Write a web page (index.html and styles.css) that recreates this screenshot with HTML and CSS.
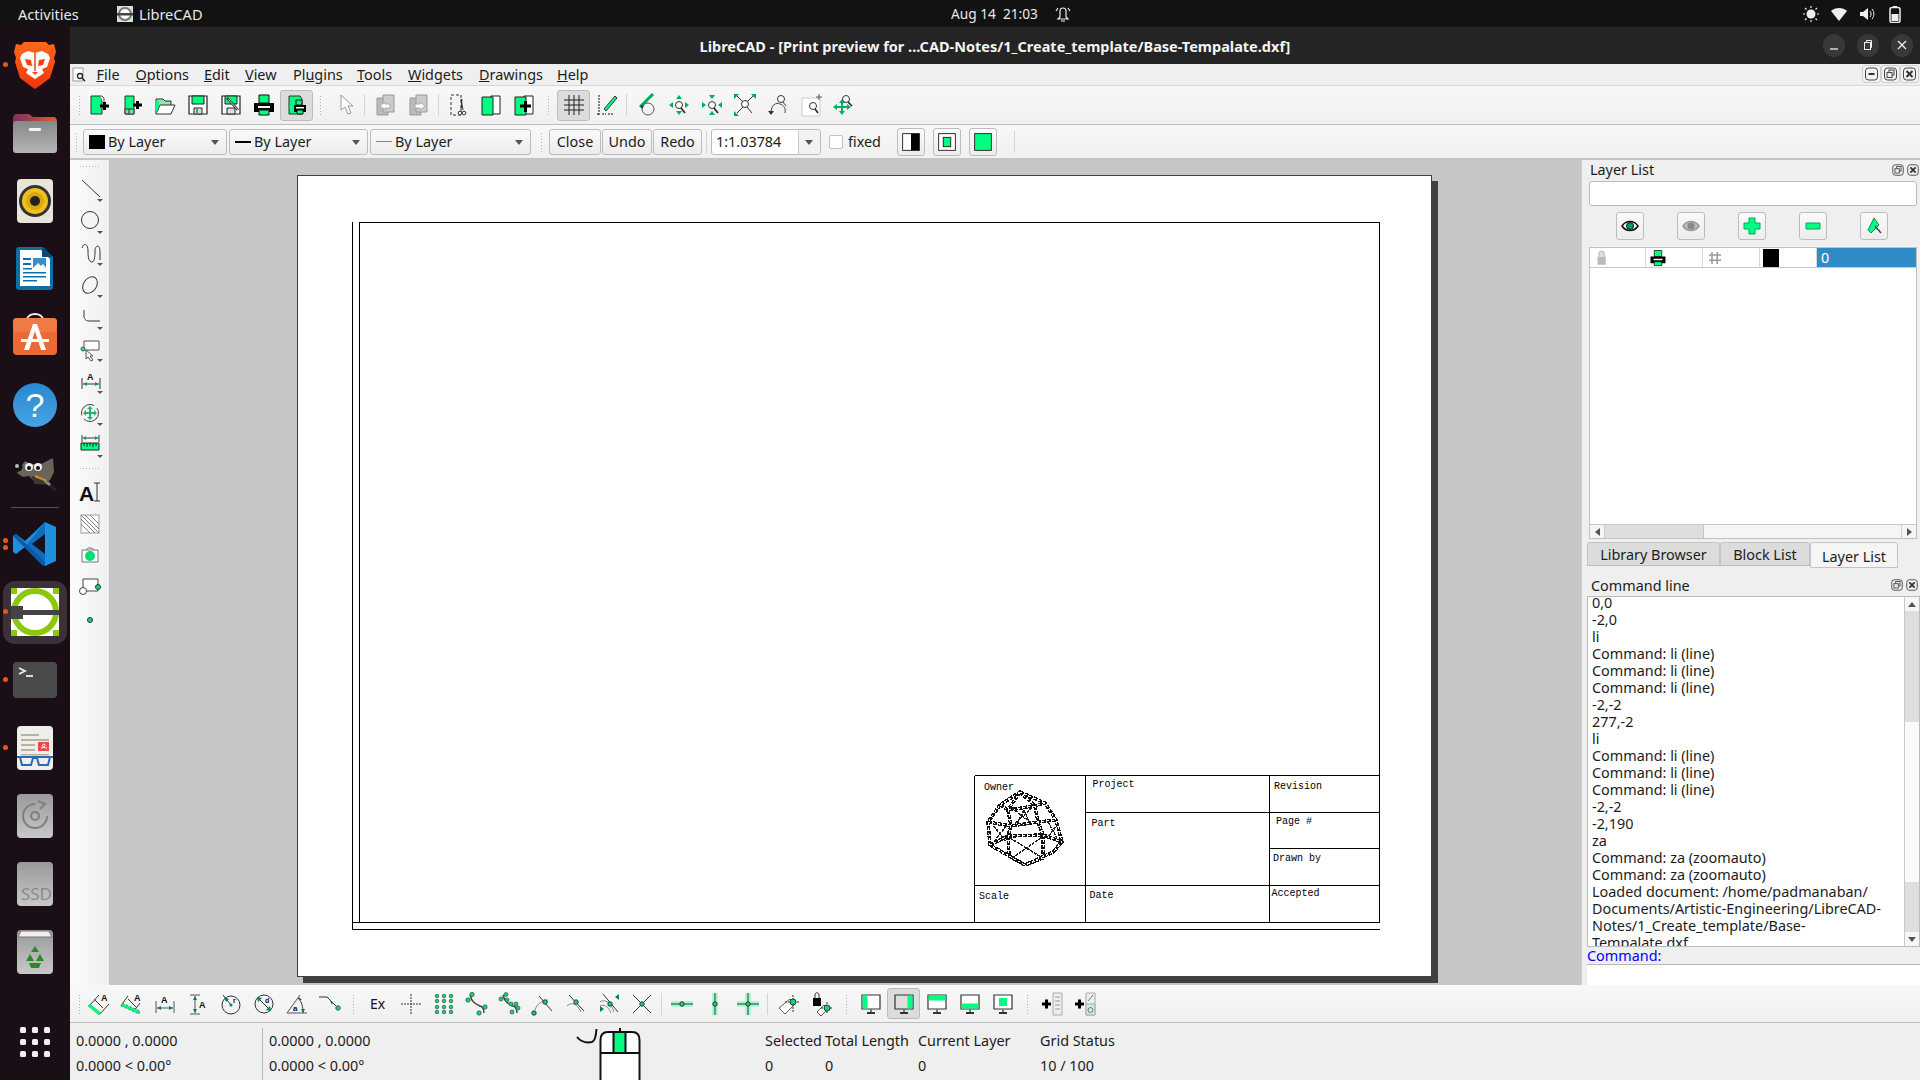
FILE: index.html
```html
<!DOCTYPE html>
<html lang="en">
<head>
<meta charset="utf-8">
<title>LibreCAD</title>
<link rel="stylesheet" href="styles.css">
</head>
<body>
<svg class="defs" xmlns="http://www.w3.org/2000/svg">
  <symbol id="new" viewBox="0 0 24 24"><path d="M4 3h9l2 3v15H4z" fill="#00ff80" stroke="#333"/><path d="M13 3h2l2 2v5" fill="#fff" stroke="#555"/><path d="M13 13h9M17.500 9v8" stroke="#000" stroke-width="3" fill="none"/></symbol>
  <symbol id="newt" viewBox="0 0 24 24"><path d="M5 3h9v18H5z" fill="#00ff80" stroke="#333"/><path d="M5 16h9v5H5zM9 16v5" fill="#7fd8a8" stroke="#333"/><path d="M13 12h9M17.500 8v8" stroke="#000" stroke-width="3" fill="none"/></symbol>
  <symbol id="open" viewBox="0 0 24 24"><path d="M3 21V6h7l2 2h6v4" fill="#8fe8b0" stroke="#333"/><path d="M3 21l4-9h15l-4 9z" fill="#fff" stroke="#333"/><path d="M3 21V8h3v4z" fill="#00ff80"/></symbol>
  <symbol id="save" viewBox="0 0 24 24"><path d="M3 3h18v18H3z" fill="#fff" stroke="#222" stroke-width="1.200"/><path d="M6 3h12v8H6z" fill="#00ff80" stroke="#222"/><path d="M8 15h8v6H8z" fill="#ddd" stroke="#222"/><path d="M10 16h2v4h-2z" fill="#00c060"/></symbol>
  <symbol id="saveas" viewBox="0 0 24 24"><path d="M3 3h18v18H3z" fill="#fff" stroke="#222" stroke-width="1.200"/><path d="M6 3h12v8H6z" fill="#00ff80" stroke="#222"/><path d="M8 15h8v6H8z" fill="#ddd" stroke="#222"/><path d="M8 5l11 12" stroke="#333" stroke-width="2.500"/><path d="M9 6l10 11" stroke="#ccc"/></symbol>
  <symbol id="print" viewBox="0 0 24 24"><path d="M7 2h10v8H7z" fill="#00ff80" stroke="#111"/><path d="M2 10h20v9H2z" fill="#000"/><path d="M6 13h12v2H6z" fill="#fff"/><path d="M7 17h10v5H7z" fill="#00ff80" stroke="#111"/></symbol>
  <symbol id="preview" viewBox="0 0 24 24"><path d="M4 3h11l2 3v15H4z" fill="#00ff80" stroke="#333"/><path d="M11 7h6v5h-6z" fill="#00ff80" stroke="#111"/><path d="M9 12h12v7H9z" fill="#000"/><path d="M11 14h8v1.500h-8z" fill="#fff"/><path d="M12 17h6v4h-6z" fill="#00ff80" stroke="#111"/></symbol>
  <symbol id="arrow" viewBox="0 0 24 24"><path d="M8 2v15l4-3 3 7 3-1-3-7h5z" fill="#fff" stroke="#999"/></symbol>
  <symbol id="copy" viewBox="0 0 24 24"><path d="M3 5h11v17H3z" fill="#bbb" stroke="#999"/><path d="M9 2h11v17H9z" fill="#ccc" stroke="#999"/><path d="M6 13l5-4v2h5v4h-5v2z" fill="#fff" stroke="#aaa"/></symbol>
  <symbol id="paste" viewBox="0 0 24 24"><path d="M3 5h11v17H3z" fill="#bbb" stroke="#999"/><path d="M9 2h11v17H9z" fill="#ccc" stroke="#999"/><path d="M18 13l-5-4v2H8v4h5v2z" fill="#fff" stroke="#aaa"/></symbol>
  <symbol id="cut" viewBox="0 0 24 24"><path d="M5 2h10v20H5z" fill="none" stroke="#333" stroke-dasharray="3 2"/><path d="M16 6l-1 11M15 6l2 11" stroke="#333"/><circle cx="14" cy="20" r="1.800" fill="#fff" stroke="#333"/><circle cx="18" cy="20" r="1.800" fill="#fff" stroke="#333"/></symbol>
  <symbol id="pages" viewBox="0 0 24 24"><path d="M12 3h9v18h-9z" fill="#fff" stroke="#222"/><path d="M3 4h11v18H3z" fill="#00ff80" stroke="#222"/></symbol>
  <symbol id="pageadd" viewBox="0 0 24 24"><path d="M12 3h9v18h-9z" fill="#fff" stroke="#222"/><path d="M3 4h11v18H3z" fill="#00ff80" stroke="#222"/><path d="M8 13h11M13.500 8v11" stroke="#000" stroke-width="3"/></symbol>
  <symbol id="grid" viewBox="0 0 24 24"><path d="M7 2v20M12 2v20M17 2v20M2 7h20M2 12h20M2 17h20" stroke="#222"/></symbol>
  <symbol id="draft" viewBox="0 0 24 24"><path d="M4 2v20M2 21h3m2 0h4m2 0h5" stroke="#111" stroke-dasharray="2 1"/><path d="M9 16L20 3l2 2L11 18z" fill="#00ff80" stroke="#333"/></symbol>
  <symbol id="redraw" viewBox="0 0 24 24"><path d="M6 14L19 1" stroke="#00b060" stroke-width="3"/><circle cx="14" cy="16" r="6" fill="none" stroke="#555"/><path d="M6 12l4 1-2 3z" fill="#333"/></symbol>
  <symbol id="zin" viewBox="0 0 24 24"><circle cx="12" cy="12" r="3.500" fill="#fff" stroke="#333"/><path d="M14 15l4 5" stroke="#222" stroke-width="1.600"/><path d="M12 2l-3 4h6zM12 22l-3-4h6zM2 12l4-3v6zM22 12l-4-3v6z" fill="#00b060"/></symbol>
  <symbol id="zout" viewBox="0 0 24 24"><circle cx="12" cy="12" r="3.500" fill="#fff" stroke="#333"/><path d="M14 15l4 5" stroke="#222" stroke-width="1.600"/><path d="M12 6l-3-4h6zM12 18l-3 4h6zM6 12L2 9v6zM18 12l4-3v6z" fill="#00b060"/></symbol>
  <symbol id="zauto" viewBox="0 0 24 24"><circle cx="12" cy="11" r="3.500" fill="#fff" stroke="#333"/><path d="M14 14l5 6M10 9L4 3M14 9l6-6M10 14l-6 6" stroke="#333"/><path d="M1 1h5L1 6zM23 1h-5l5 5zM1 23h5l-5-5z" fill="#00a060"/></symbol>
  <symbol id="zprev" viewBox="0 0 24 24"><circle cx="15" cy="6" r="3.500" fill="#fff" stroke="#333"/><path d="M17 9l3 4M5 20c0-8 5-11 9-9 4 1 6 5 5 9" fill="none" stroke="#444"/><path d="M2 18h6l-3 4z" fill="#333"/></symbol>
  <symbol id="zwin" viewBox="0 0 24 24"><path d="M3 5h18v18H3z" fill="#fff" stroke="#ccc"/><circle cx="14" cy="13" r="3.500" fill="#fff" stroke="#333"/><path d="M16 16l3 4" stroke="#222" stroke-width="1.600"/><path d="M20 1v6M17 4h6" stroke="#555"/></symbol>
  <symbol id="zpan" viewBox="0 0 24 24"><path d="M10 6l-3 4h2v3H5v-2l-4 3 4 3v-2h4v3H7l3 4 3-4h-2v-3h4v2l4-3-4-3v2h-4v-3h2z" fill="#00b060"/><circle cx="14" cy="6" r="3.500" fill="#fff" stroke="#333"/><path d="M16 9l4 4" stroke="#222" stroke-width="1.600"/></symbol>

  <symbol id="line" viewBox="0 0 24 24"><path d="M2 2l18 17" stroke="#333"/><path d="M17 21h6l-3 3z" fill="#555"/></symbol>
  <symbol id="circle" viewBox="0 0 24 24"><circle cx="10" cy="10" r="8.500" fill="none" stroke="#333"/><path d="M17 21h6l-3 3z" fill="#555"/></symbol>
  <symbol id="spline" viewBox="0 0 24 24"><path d="M2 6c2-6 6-4 6 3s1 11 4 11 3-8 3-12 5-7 5 2v8" fill="none" stroke="#333"/><path d="M17 21h6l-3 3z" fill="#555"/></symbol>
  <symbol id="ellipse" viewBox="0 0 24 24"><ellipse cx="10" cy="11" rx="6.500" ry="9" transform="rotate(35 10 11)" fill="none" stroke="#333"/><path d="M17 21h6l-3 3z" fill="#555"/></symbol>
  <symbol id="poly" viewBox="0 0 24 24"><path d="M4 4v6c0 4 3 5 5 5h11" fill="none" stroke="#333"/><path d="M17 21h6l-3 3z" fill="#555"/></symbol>
  <symbol id="sel" viewBox="0 0 24 24"><path d="M4 3h15v9H4z" fill="#fff" stroke="#555"/><circle cx="3" cy="11" r="2" fill="#00ff80" stroke="#555"/><path d="M6 12v9l2-2 3 4 2-1-3-4h3z" fill="#fff" stroke="#555"/><path d="M17 21h6l-3 3z" fill="#555"/></symbol>
  <symbol id="dim" viewBox="0 0 24 24"><text class="glyph" x="7" y="10" font-size="9">A</text><path d="M2 8v11M20 8v11M3 14h16" stroke="#333"/><path d="M3 14l4-2v4zM19 14l-4-2v4z" fill="#00a060"/><path d="M17 21h6l-3 3z" fill="#555"/></symbol>
  <symbol id="move" viewBox="0 0 24 24"><circle cx="10" cy="11" r="8.500" fill="none" stroke="#444" stroke-dasharray="20 4"/><path d="M10 4l-3 3h2v3H6V8l-3 3 3 3v-2h3v3H7l3 3 3-3h-2v-3h3v2l3-3-3-3v2h-3V7h2z" fill="#28b070"/><path d="M17 21h6l-3 3z" fill="#555"/></symbol>
  <symbol id="ruler" viewBox="0 0 24 24"><path d="M2 1v7M19 1v7M3 4h15" stroke="#333"/><path d="M3 4l3-2v4zM18 4l-3-2v4z" fill="#00a060"/><path d="M1 9h18v7H1z" fill="#00ff80" stroke="#222"/><path d="M4 9v3M7 9v4M10 9v3M13 9v4M16 9v3" stroke="#222"/><path d="M17 21h6l-3 3z" fill="#555"/></symbol>
  <symbol id="txt" viewBox="0 0 24 24"><text class="glyph" x="1" y="21" font-size="21">A</text><path d="M19 3v18M16 3h6M16 21h6" stroke="#333"/></symbol>
  <symbol id="hatch" viewBox="0 0 24 24"><path d="M3 3h18v18H3z" fill="#fff" stroke="#bbb" stroke-width="1.500"/><path d="M3 7l14 14M3 12l9 9M7 3l14 14M12 3l9 9M3 3l18 18" stroke="#666" stroke-width=".8"/></symbol>
  <symbol id="image" viewBox="0 0 24 24"><path d="M4 6h16v12H4z" fill="#fff" stroke="#777"/><path d="M8 6l2-2h4l2 2" fill="none" stroke="#777"/><circle cx="12" cy="12" r="5" fill="#00e070"/></symbol>
  <symbol id="block" viewBox="0 0 24 24"><path d="M5 3h15v12H5z" fill="#fff" stroke="#444"/><circle cx="5" cy="15" r="3.500" fill="#fff" stroke="#444"/><circle cx="20" cy="11" r="2.500" fill="#00e070" stroke="#333"/></symbol>
  <symbol id="point" viewBox="0 0 24 24"><circle cx="12" cy="12" r="2.500" fill="#00e070" stroke="#333"/></symbol>

  <symbol id="dimal" viewBox="0 0 24 24"><text class="glyph" x="14" y="9" font-size="9">A</text><path d="M3 13l9-10M13 22l9-10M7 7l9 9" stroke="#333"/><path d="M1 14l11 9 2-2L3 12z" fill="#00ff80" stroke="#00c060" stroke-width=".5"/></symbol>
  <symbol id="dimli" viewBox="0 0 24 24"><text class="glyph" x="14" y="9" font-size="9">A</text><path d="M8 4l-6 8M20 11l-6 8M8 7l8 8" stroke="#333"/><path d="M1 14l18 8 1-3L2 11z" fill="#00ff80" stroke="#222" stroke-width=".5" stroke-dasharray="2 2"/></symbol>
  <symbol id="dimh" viewBox="0 0 24 24"><text class="glyph" x="8" y="11" font-size="9">A</text><path d="M3 9v12M21 9v12M4 16h16" stroke="#555"/><path d="M4 16l4-2v4zM20 16l-4-2v4z" fill="#00805a"/></symbol>
  <symbol id="dimv" viewBox="0 0 24 24"><text class="glyph" x="13" y="16" font-size="9">A</text><path d="M4 3h10M4 22h10M9 4v17" stroke="#555"/><path d="M9 4l-2 4h4zM9 21l-2-4h4z" fill="#00805a"/></symbol>
  <symbol id="rad" viewBox="0 0 24 24"><circle cx="12" cy="13" r="9" fill="none" stroke="#333"/><path d="M4 3l8 10" stroke="#333"/><path d="M5 5l5 2-3 3z" fill="#00805a"/><circle cx="12" cy="13" r="1.500" fill="#00805a"/><text class="glyph" x="14" y="11" font-size="7">r</text></symbol>
  <symbol id="dia" viewBox="0 0 24 24"><circle cx="12" cy="12" r="9" fill="none" stroke="#333"/><path d="M6 6l12 12" stroke="#333"/><path d="M5 5l5 1-4 4zM19 19l-5-1 4-4z" fill="#00805a"/><text class="glyph" x="13" y="11" font-size="7">d</text></symbol>
  <symbol id="ang" viewBox="0 0 24 24"><path d="M2 21h20M2 21L15 3" fill="none" stroke="#555"/><path d="M13 6c4 4 5 9 5 15" fill="none" stroke="#333"/><path d="M14 5l3 3-3 0zM18 21l-2-4h4z" fill="#00805a"/><text class="glyph" x="8" y="19" font-size="8">a</text></symbol>
  <symbol id="leader" viewBox="0 0 24 24"><path d="M1 5h8l11 11" fill="none" stroke="#333"/><circle cx="20" cy="16" r="2.200" fill="#00e070" stroke="#555"/><path d="M12 9l3 1-1 3z" fill="#00805a"/></symbol>
  <symbol id="cross" viewBox="0 0 24 24"><path d="M12 2v20M2 12h20" stroke="#333" stroke-dasharray="2 1"/></symbol>
  <symbol id="dots" viewBox="0 0 24 24"><g fill="#00e070" stroke="#333" stroke-width=".6"><circle cx="5" cy="4" r="1.800"/><circle cx="12" cy="4" r="1.800"/><circle cx="19" cy="4" r="1.800"/><circle cx="5" cy="9" r="1.800"/><circle cx="12" cy="9" r="1.800"/><circle cx="19" cy="9" r="1.800"/><circle cx="5" cy="15" r="1.800"/><circle cx="12" cy="15" r="1.800"/><circle cx="19" cy="15" r="1.800"/><circle cx="5" cy="20" r="1.800"/><circle cx="12" cy="20" r="1.800"/><circle cx="19" cy="20" r="1.800"/></g></symbol>
  <symbol id="sendp" viewBox="0 0 24 24"><path d="M5 3c2 8 6 9 12 12 2 2 2 4 2 6" fill="none" stroke="#444" stroke-width="1.500"/><g fill="#00e070" stroke="#333" stroke-width=".6"><circle cx="7" cy="2.500" r="2.200"/><circle cx="3" cy="8" r="2.200"/><circle cx="20" cy="15" r="2.200"/><circle cx="14" cy="21" r="2.200"/></g></symbol>
  <symbol id="sent" viewBox="0 0 24 24"><path d="M5 3c2 8 6 9 12 12 2 2 2 4 2 6" fill="none" stroke="#444" stroke-width="1.500"/><g fill="#00e070" stroke="#333" stroke-width=".6"><circle cx="8" cy="2.500" r="2"/><circle cx="3" cy="7" r="2"/><circle cx="9" cy="8" r="2"/><circle cx="13" cy="12" r="2"/><circle cx="18" cy="12" r="2"/><circle cx="20" cy="16" r="2"/><circle cx="14" cy="20" r="2"/></g></symbol>
  <symbol id="scen" viewBox="0 0 24 24"><path d="M4 18c2-6 6-9 13-10" fill="none" stroke="#888"/><path d="M8 4l13 15" stroke="#333"/><circle cx="14" cy="10" r="2.200" fill="#00e070" stroke="#333"/><circle cx="3" cy="21" r="2.200" fill="#00e070" stroke="#333"/></symbol>
  <symbol id="smid" viewBox="0 0 24 24"><path d="M3 14c4-4 10-3 14 6" fill="none" stroke="#888"/><path d="M5 3l15 16" stroke="#333"/><circle cx="12" cy="10" r="2.200" fill="#00e070" stroke="#333"/></symbol>
  <symbol id="sdis" viewBox="0 0 24 24"><path d="M3 10c4-3 10-1 14 10M3 14c4-2 8 0 11 7" fill="none" stroke="#888"/><path d="M6 2l15 18" stroke="#333"/><path d="M22 2v6l-4-3zM3 20v-6l4 3z" fill="#00805a"/><circle cx="13" cy="12" r="2.200" fill="#00e070" stroke="#333"/></symbol>
  <symbol id="sint" viewBox="0 0 24 24"><path d="M3 3l18 18M21 3L3 21" stroke="#333"/><circle cx="12" cy="12" r="2.200" fill="#00e070" stroke="#333"/></symbol>
  <symbol id="rh" viewBox="0 0 24 24"><path d="M1 9h22v6H1z" fill="#a8f8d0"/><path d="M1 12h22" stroke="#333"/><circle cx="12" cy="12" r="2.200" fill="#00e070" stroke="#333"/></symbol>
  <symbol id="rv" viewBox="0 0 24 24"><path d="M9 1h6v22H9z" fill="#a8f8d0"/><path d="M12 1v22" stroke="#333"/><circle cx="12" cy="12" r="2.200" fill="#00e070" stroke="#333"/></symbol>
  <symbol id="ro" viewBox="0 0 24 24"><path d="M9 1h6v22H9zM1 9h22v6H1z" fill="#a8f8d0"/><path d="M12 1v22M1 12h22" stroke="#333"/><circle cx="12" cy="12" r="2.200" fill="#00e070" stroke="#333"/></symbol>
  <symbol id="rel" viewBox="0 0 24 24"><path d="M2 16l11-9 5 5-10 10z" fill="#fff" stroke="#333" stroke-width=".8"/><path d="M16 3v18M8 10h14" stroke="#333" stroke-dasharray="2 1"/><circle cx="16" cy="10" r="3" fill="#00e070" stroke="#333"/></symbol>
  <symbol id="lock" viewBox="0 0 24 24"><path d="M3 6h8v8H3z" fill="#000"/><path d="M5 6V3c0-3 4-3 4 0v3" fill="none" stroke="#333"/><path d="M7 20l7-7 4 4-7 7z" fill="#fff" stroke="#333" stroke-width=".8"/><path d="M17 10v12M11 16h12" stroke="#333" stroke-dasharray="2 1"/><circle cx="17" cy="16" r="3" fill="#00e070" stroke="#333"/></symbol>
  <symbol id="vl" viewBox="0 0 24 24"><path d="M3 3h18v14H3z" fill="#fff" stroke="#333" stroke-width="1.200"/><path d="M3.500 3.500h5v13h-5z" fill="#00ff80"/><path d="M8 20h8v2H8z" fill="#333"/><path d="M11 17h2v3h-2z" fill="#777"/></symbol>
  <symbol id="vr" viewBox="0 0 24 24"><path d="M3 3h18v14H3z" fill="#ddd" stroke="#333" stroke-width="1.200"/><path d="M15.500 3.500h5v13h-5z" fill="#00ff80"/><path d="M8 20h8v2H8z" fill="#333"/><path d="M11 17h2v3h-2z" fill="#777"/></symbol>
  <symbol id="vt" viewBox="0 0 24 24"><path d="M3 3h18v14H3z" fill="#fff" stroke="#333" stroke-width="1.200"/><path d="M3.500 3.500h17v5h-17z" fill="#00ff80"/><path d="M8 20h8v2H8z" fill="#333"/><path d="M11 17h2v3h-2z" fill="#777"/></symbol>
  <symbol id="vb" viewBox="0 0 24 24"><path d="M3 3h18v14H3z" fill="#fff" stroke="#333" stroke-width="1.200"/><path d="M3.500 11.500h17v5h-17z" fill="#00ff80"/><path d="M8 20h8v2H8z" fill="#333"/><path d="M11 17h2v3h-2z" fill="#777"/></symbol>
  <symbol id="vc" viewBox="0 0 24 24"><path d="M3 3h18v14H3z" fill="#fff" stroke="#333" stroke-width="1.200"/><path d="M8 6h8v8H8z" fill="#00ff80"/><path d="M8 20h8v2H8z" fill="#333"/><path d="M11 17h2v3h-2z" fill="#777"/></symbol>
  <symbol id="addl" viewBox="0 0 24 24"><path d="M13 1h9v22h-9z" fill="#eee" stroke="#aaa"/><path d="M15 5h5M15 9h5M15 13h5M15 17h5" stroke="#999"/><path d="M2 12h9M6.500 7.500v9" stroke="#000" stroke-width="3"/></symbol>
  <symbol id="addt" viewBox="0 0 24 24"><path d="M13 1h9v22h-9z" fill="#eee" stroke="#aaa"/><path d="M13 12h9v11h-9z" fill="#c8f0d8" stroke="#aaa"/><path d="M15 9l5-6" stroke="#777"/><circle cx="17.500" cy="18" r="2.500" fill="none" stroke="#777"/><path d="M2 12h9M6.500 7.500v9" stroke="#000" stroke-width="3"/></symbol>
  <symbol id="eye" viewBox="0 0 24 24"><path d="M4 12c4-6 12-6 16 0-4 6-12 6-16 0z" fill="#fff" stroke="#111" stroke-width="1.600"/><circle cx="12" cy="12" r="3.500" fill="#00a060" stroke="#111"/></symbol>
  <symbol id="eyeg" viewBox="0 0 24 24"><path d="M4 12c4-6 12-6 16 0-4 6-12 6-16 0z" fill="#bbb" stroke="#999" stroke-width="1.600"/><circle cx="12" cy="12" r="3.500" fill="#888"/></symbol>
  <symbol id="plus" viewBox="0 0 24 24"><path d="M9 4h6v5h5v6h-5v5H9v-5H4V9h5z" fill="#00ff80" stroke="#00a860"/></symbol>
  <symbol id="minus" viewBox="0 0 24 24"><path d="M5 9h14v6H5z" fill="#00ff80" stroke="#00a860"/></symbol>
  <symbol id="pen" viewBox="0 0 24 24"><path d="M12 4l5 7-8 8-3-3z" fill="#00ff80" stroke="#00905a"/><path d="M13 12l6 7" stroke="#444" stroke-width="1.500"/></symbol>
  <symbol id="padlock" viewBox="0 0 24 24"><path d="M6 10h11v11H6z" fill="#bbb"/><path d="M8 10V6c0-4 7-4 7 0v4" fill="#ddd" stroke="#bbb" stroke-width="1.500"/></symbol>
  <symbol id="gridg" viewBox="0 0 24 24"><path d="M8 4v16M15 4v16M4 8h16M4 15h16" stroke="#999" stroke-width="2"/></symbol>
  <symbol id="mdi" viewBox="0 0 16 16"><rect x="2" y="2" width="12" height="12" rx="3" fill="none" stroke="#444"/><path d="M5 8h6" stroke="#333" stroke-width="2"/></symbol>
  <symbol id="mdr" viewBox="0 0 16 16"><rect x="2" y="2" width="12" height="12" rx="3" fill="none" stroke="#444"/><rect x="6.500" y="4" width="5" height="5" fill="none" stroke="#444"/><rect x="4.500" y="6.500" width="5" height="5" fill="#eee" stroke="#444"/></symbol>
  <symbol id="mdx" viewBox="0 0 16 16"><rect x="2" y="2" width="12" height="12" rx="3" fill="none" stroke="#444"/><path d="M5 5l6 6M11 5l-6 6" stroke="#333" stroke-width="2"/></symbol>
</svg>

<div class="screen">
  <header class="topbar">
    <span class="activities">Activities</span>
    <span class="appname">
      <svg class="app-ico" viewBox="0 0 16 16"><rect width="16" height="16" fill="#ddd"/><circle cx="8" cy="8" r="6" fill="#fff" stroke="#777" stroke-width="2"/><rect y="7" width="16" height="2.500" fill="#444"/></svg>
      LibreCAD
    </span>
    <span class="clock">Aug 14&nbsp; 21:03
      <svg class="bell" viewBox="0 0 16 18"><path d="M5 12V6c0-4 6-4 6 0v6l2 2H3zM6 16h4M3 3L1 6M13 3l2 3" fill="none" stroke="#eee" stroke-width="1.200"/></svg>
    </span>
    <span class="tray">
      <svg class="tray-ico" viewBox="0 0 18 18"><circle cx="9" cy="9" r="4.500" fill="#eee"/><path d="M9 1v2M9 15v2M1 9h2M15 9h2M3 3l1.500 1.500M13.500 13.500L15 15M15 3l-1.500 1.500M4.500 13.500L3 15" stroke="#eee" stroke-width="1.200"/></svg>
      <svg class="tray-ico" viewBox="0 0 18 18"><path d="M1 6c4-4 12-4 16 0l-8 10z" fill="#eee"/></svg>
      <svg class="tray-ico" viewBox="0 0 18 18"><path d="M2 7h3l5-4v12l-5-4H2z" fill="#eee"/><path d="M12 6c1.500 2 1.500 4 0 6M14 4c2.500 3 2.500 7 0 10" fill="none" stroke="#eee"/></svg>
      <svg class="tray-ico" viewBox="0 0 18 18"><rect x="4" y="2.500" width="10" height="15" rx="2" fill="none" stroke="#eee" stroke-width="1.500"/><rect x="7" y="1" width="4" height="2" fill="#eee"/><rect x="5.500" y="9" width="7" height="7" fill="#eee"/></svg>
    </span>
  </header>

  <div class="desktop">
    <nav class="dock">
      <div class="dock-item"><i class="dot"></i>
        <svg class="dock-ico" viewBox="0 0 48 48"><defs><linearGradient id="br" x1="0" y1="0" x2="0" y2="1"><stop offset="0" stop-color="#ff6a1a"/><stop offset="1" stop-color="#f1330c"/></linearGradient></defs><path d="M13 1h22l3 3 5-1 2 8-2 6 1 4-5 16-12 9-3 2-3-2-12-9-5-16 1-4-2-6 2-8 5 1z" fill="url(#br)"/><path d="M11 13l6-3 7 2 7-2 6 3 2 4-3 9-5 2 2 4-9 6-9-6 2-4-5-2-3-9z" fill="#fff"/><path d="M14 18l6 1 1 6-5-1zM34 18l-6 1-1 6 5-1zM21 31h6l-3 3z" fill="#f1420f"/><path d="M24 12v18" stroke="#f1420f" stroke-width="1.500"/></svg>
      </div>
      <div class="dock-item">
        <svg class="dock-ico" viewBox="0 0 48 48"><defs><linearGradient id="fo" x1="0" y1="0" x2="1" y2="0"><stop offset="0" stop-color="#7a3060"/><stop offset="1" stop-color="#d8602a"/></linearGradient><linearGradient id="fg" x1="0" y1="0" x2="0" y2="1"><stop offset="0" stop-color="#888"/><stop offset="1" stop-color="#b4b4b4"/></linearGradient></defs><path d="M2 10c0-3 1-5 4-5h12l4 3h20c3 0 4 2 4 5v8H2z" fill="url(#fo)"/><rect x="2" y="12" width="44" height="32" rx="3" fill="url(#fg)"/><rect x="18" y="19" width="12" height="3" rx="1" fill="#f4f4f4"/></svg>
      </div>
      <div class="dock-item">
        <svg class="dock-ico" viewBox="0 0 48 48"><rect x="6" y="2" width="36" height="44" rx="4" fill="#e8e4d8"/><circle cx="24" cy="24" r="16" fill="#333"/><circle cx="24" cy="24" r="13" fill="#f0c020"/><circle cx="24" cy="24" r="9" fill="#d8a810"/><circle cx="24" cy="24" r="5" fill="#222"/></svg>
      </div>
      <div class="dock-item">
        <svg class="dock-ico" viewBox="0 0 48 48"><path d="M8 2h24l10 10v30c0 2-1 3-3 3H8c-2 0-3-1-3-3V5c0-2 1-3 3-3z" fill="#0d6ea8"/><path d="M9 5h21l9 9v27H9z" fill="#fff"/><path d="M31 2l11 10H31z" fill="#0a4a78"/><rect x="12" y="13" width="8" height="2" fill="#0d6ea8"/><rect x="12" y="18" width="8" height="2" fill="#0d6ea8"/><rect x="22" y="13" width="13" height="10" fill="#3a8ec4"/><path d="M22 23l5-5 3 3 2-2 3 4z" fill="#fff"/><path d="M12 23h9v1.500h-9zM12 27h23v1.500H12zM12 31h23v1.500H12zM12 35h14v1.500H12z" fill="#0d6ea8"/></svg>
      </div>
      <div class="dock-item">
        <svg class="dock-ico" viewBox="0 2 48 48"><path d="M16 9c0-8 16-8 16 0" fill="none" stroke="#eee" stroke-width="2"/><rect x="2" y="7" width="44" height="37" rx="4" fill="#e96a34"/><rect x="2" y="7" width="44" height="14" rx="4" fill="#ee7a44"/><path d="M10 28h28v3H10zM22 13h4l9 26h-5l-6-19-6 19h-5z" fill="#fff"/></svg>
      </div>
      <div class="dock-item">
        <svg class="dock-ico" viewBox="0 0 48 48"><defs><linearGradient id="he" x1="0" y1="0" x2="0" y2="1"><stop offset="0" stop-color="#2a88d0"/><stop offset="1" stop-color="#45a4e2"/></linearGradient></defs><circle cx="24" cy="24" r="22" fill="url(#he)"/><text class="help-q" x="24" y="36" text-anchor="middle">?</text></svg>
      </div>
      <div class="dock-item">
        <svg class="dock-ico" viewBox="0 0 48 48"><path d="M14 12l6 3h10l12-6 1 14-4 8-10 3-7-3-4-4-6 1-6-4 3-5z" fill="#6a6458"/><path d="M20 27l8 1 10 8-14-1z" fill="#3c3830"/><circle cx="7" cy="18" r="4.500" fill="#111"/><circle cx="6" cy="17" r="2" fill="#bbb"/><circle cx="18" cy="18" r="4" fill="#eee"/><circle cx="18" cy="19" r="2" fill="#111"/><circle cx="27" cy="18" r="4" fill="#eee"/><circle cx="27" cy="19" r="2" fill="#111"/><path d="M24 27l14 6" stroke="#d48a30" stroke-width="2"/><path d="M36 31l10 9-2 3-10-9z" fill="#222"/><path d="M35 31l5 4-2 2-5-4z" fill="#888"/></svg>
      </div>
      <hr class="dock-sep">
      <div class="dock-item"><i class="dot dot-a"></i><i class="dot dot-b"></i>
        <svg class="dock-ico" viewBox="0 0 48 48"><path d="M34 2l11 5v34l-11 5-20-19-9 7-3-2v-16l3-2 9 7z" fill="#1f8fe0"/><path d="M34 2v44l-20-19z" fill="#0f6cc0"/><path d="M34 14v20l-13-10z" fill="#1b1118"/><path d="M2 16l3-2 29 28v4l-3-1z" fill="#0a5ca8"/></svg>
      </div>
      <div class="dock-item active"><i class="dot"></i>
        <svg class="dock-ico" viewBox="0 0 48 48"><rect width="48" height="48" fill="#fff"/><path d="M0 0h6v6H0zM42 0h6v6h-6zM0 42h6v6H0zM42 42h6v6h-6z" fill="#8cc80a"/><circle cx="24" cy="24" r="21" fill="none" stroke="#8cc80a" stroke-width="6"/><path d="M0 18h12v4h36v5H12v4H0z" fill="#444"/></svg>
      </div>
      <div class="dock-item"><i class="dot"></i>
        <svg class="dock-ico" viewBox="0 0 48 48"><rect x="2" y="6" width="44" height="36" rx="4" fill="#4a4a4a"/><path d="M8 12l6 3-6 3" fill="none" stroke="#eee" stroke-width="1.800"/><path d="M15 20h7" stroke="#eee" stroke-width="1.800"/></svg>
      </div>
      <div class="dock-item"><i class="dot"></i>
        <svg class="dock-ico" viewBox="0 0 48 48"><rect x="6" y="2" width="36" height="44" rx="4" fill="#eeeeea"/><path d="M10 10h18v2H10zM10 15h28v2H10zM10 20h14v2H10zM10 25h14v2H10zM10 30h28v1.500H10z" fill="#b8b0a0"/><path d="M27 18h11v9H27z" fill="#f04848"/><path d="M30 24c4 0 5-4 3-4s-3 4 3 4" fill="none" stroke="#fff"/><path d="M6 33h36M9 33l2 8h9l2-7h4l2 7h9l2-8" fill="none" stroke="#2a68b8" stroke-width="2"/></svg>
      </div>
      <div class="dock-item">
        <svg class="dock-ico" viewBox="0 0 48 48"><defs><linearGradient id="gr" x1="0" y1="0" x2="0" y2="1"><stop offset="0" stop-color="#9a9a9a"/><stop offset="1" stop-color="#c8c8c8"/></linearGradient></defs><rect x="6" y="2" width="36" height="44" rx="4" fill="url(#gr)"/><path d="M24 12a12 12 0 1 0 12 12" fill="none" stroke="#808080" stroke-width="2"/><path d="M27 9l7 3-5 5" fill="none" stroke="#808080" stroke-width="2"/><circle cx="24" cy="24" r="4" fill="none" stroke="#808080" stroke-width="2"/></svg>
      </div>
      <div class="dock-item">
        <svg class="dock-ico" viewBox="0 0 48 48"><rect x="6" y="2" width="36" height="44" rx="4" fill="url(#gr)"/><text class="ssd" x="41" y="40" text-anchor="end">SSD</text></svg>
      </div>
      <div class="dock-item">
        <svg class="dock-ico" viewBox="0 0 48 48"><rect x="6" y="2" width="36" height="44" rx="4" fill="url(#gr)"/><path d="M10 3h28l3 6H7z" fill="#f0f0f0" stroke="#777"/><path d="M24 18l4 6h-8zM15 33l4-7 4 7zM33 33l-4-7-4 7zM18 35h12l-2 5h-8z" fill="#2a8a2a"/></svg>
      </div>
      <div class="dock-grid"><i></i><i></i><i></i><i></i><i></i><i></i><i></i><i></i><i></i></div>
    </nav>

    <main class="window">
      <div class="titlebar">
        <span class="title">LibreCAD - [Print preview for ...CAD-Notes/1_Create_template/Base-Tempalate.dxf]</span>
        <span class="win-btns">
          <span class="win-btn"><svg viewBox="0 0 22 22"><path d="M7 15h8" stroke="#eee" stroke-width="1.300"/></svg></span>
          <span class="win-btn"><svg viewBox="0 0 22 22"><rect x="7.500" y="8.500" width="6" height="7" fill="none" stroke="#eee"/><path d="M9.500 8.500v-2h5v7h-1" fill="none" stroke="#eee"/></svg></span>
          <span class="win-btn"><svg viewBox="0 0 22 22"><path d="M7 7l8 8M15 7l-8 8" stroke="#eee" stroke-width="1.300"/></svg></span>
        </span>
      </div>

      <div class="menubar">
        <svg class="doc-ico" viewBox="0 0 16 16"><path d="M2 1h10v13H2z" fill="#fff" stroke="#999"/><circle cx="9" cy="9" r="2.500" fill="#fff" stroke="#222" stroke-width="1.300"/><path d="M11 11l3 3" stroke="#222" stroke-width="1.500"/></svg>
        <div class="menus">
          <span><u>F</u>ile</span><span><u>O</u>ptions</span><span><u>E</u>dit</span><span><u>V</u>iew</span><span>Pl<u>u</u>gins</span><span><u>T</u>ools</span><span><u>W</u>idgets</span><span><u>D</u>rawings</span><span><u>H</u>elp</span>
        </div>
        <div class="mdi-btns">
          <span class="mdi-btn"><svg><use href="#mdi"/></svg></span><span class="mdi-btn"><svg><use href="#mdr"/></svg></span><span class="mdi-btn"><svg><use href="#mdx"/></svg></span>
        </div>
      </div>

      <div class="toolbar tb1">
        <i class="handle h7"></i>
        <span class="tool"><svg><use href="#new"/></svg></span>
        <span class="tool"><svg><use href="#newt"/></svg></span>
        <span class="tool"><svg><use href="#open"/></svg></span>
        <span class="tool"><svg><use href="#save"/></svg></span>
        <span class="tool"><svg><use href="#saveas"/></svg></span>
        <span class="tool"><svg><use href="#print"/></svg></span>
        <span class="tool on"><svg><use href="#preview"/></svg></span>
        <i class="handle h15"></i>
        <span class="tool"><svg><use href="#arrow"/></svg></span>
        <i class="sep sep8"></i>
        <span class="tool"><svg><use href="#copy"/></svg></span>
        <span class="tool"><svg><use href="#paste"/></svg></span>
        <i class="sep sep6"></i>
        <span class="tool"><svg><use href="#cut"/></svg></span>
        <span class="tool"><svg><use href="#pages"/></svg></span>
        <span class="tool"><svg><use href="#pageadd"/></svg></span>
        <i class="handle h17"></i>
        <span class="tool on"><svg><use href="#grid"/></svg></span>
        <span class="tool"><svg><use href="#draft"/></svg></span>
        <i class="sep sep6"></i>
        <span class="tool"><svg><use href="#redraw"/></svg></span>
        <span class="tool"><svg><use href="#zin"/></svg></span>
        <span class="tool"><svg><use href="#zout"/></svg></span>
        <span class="tool"><svg><use href="#zauto"/></svg></span>
        <span class="tool"><svg><use href="#zprev"/></svg></span>
        <span class="tool"><svg><use href="#zwin"/></svg></span>
        <span class="tool"><svg><use href="#zpan"/></svg></span>
      </div>

      <div class="toolbar tb2">
        <i class="handle h13"></i>
        <span class="combo c1"><b class="swatch"></b>By Layer<em class="caret"></em></span>
        <span class="combo c2"><b class="ln thick"></b>By Layer<em class="caret"></em></span>
        <span class="combo c3"><b class="ln thin"></b>By Layer<em class="caret"></em></span>
        <i class="handle h16"></i>
        <span class="btn w52">Close</span>
        <span class="btn w51">Undo</span>
        <span class="btn w49">Redo</span>
        <i class="sep sep7"></i>
        <span class="scale"><span class="scale-val">1:1.03784</span><em class="caret"></em></span>
        <span class="check"></span>
        <span class="fixed">fixed</span>
        <span class="sq"><svg viewBox="0 0 28 26"><rect x="5" y="4" width="18" height="18" fill="#fff" stroke="#222"/><rect x="14" y="4" width="9" height="18" fill="#000"/></svg></span>
        <span class="sq"><svg viewBox="0 0 28 26"><rect x="5" y="4" width="18" height="18" fill="#fff" stroke="#222"/><rect x="10" y="8" width="8" height="10" fill="#00ff80" stroke="#222"/></svg></span>
        <span class="sq"><svg viewBox="0 0 28 26"><rect x="5" y="4" width="18" height="18" fill="#00ff80" stroke="#222"/></svg></span>
        <i class="sep sep-end"></i>
      </div>

      <div class="workspace">
        <aside class="lefttools">
          <i class="vhandle"></i>
          <span class="ltool dd"><svg><use href="#line"/></svg></span>
          <span class="ltool dd"><svg><use href="#circle"/></svg></span>
          <span class="ltool dd"><svg><use href="#spline"/></svg></span>
          <span class="ltool dd"><svg><use href="#ellipse"/></svg></span>
          <span class="ltool dd"><svg><use href="#poly"/></svg></span>
          <span class="ltool dd"><svg><use href="#sel"/></svg></span>
          <span class="ltool dd"><svg><use href="#dim"/></svg></span>
          <span class="ltool dd"><svg><use href="#move"/></svg></span>
          <span class="ltool dd"><svg><use href="#ruler"/></svg></span>
          <i class="vhandle v2"></i>
          <span class="ltool"><svg><use href="#txt"/></svg></span>
          <span class="ltool"><svg><use href="#hatch"/></svg></span>
          <span class="ltool"><svg><use href="#image"/></svg></span>
          <span class="ltool"><svg><use href="#block"/></svg></span>
          <span class="ltool"><svg><use href="#point"/></svg></span>
        </aside>

        <section class="canvas">
          <div class="paper">
            <svg class="sheet" viewBox="298 176 1133 800">
              <g class="ink">
                <path d="M352.500 222V929.500H1380M352 922.500h7"/>
                <rect x="359.500" y="222.500" width="1020" height="700"/>
                <path d="M974.500 775.500H1380M974.500 775.500V922M1085.500 775.500V922M1269.500 775.500V922M1086 812.500H1380M1270 848.500H1380M974.500 885.500H1380"/>
              </g>
              <g class="logo">
                <path class="beam" d="M1020 792L1045 803L1056 820L1062 842L1053 852L1025 865L990 845L988 822L1000 805ZM1000 805L1008 810L1035 806L1045 803M1008 810L1011 826M1035 806L1038 822M1020 792L1035 806M1020 792L1008 810M988 822L1011 826L1038 822L1056 820M1011 826L1008 836M1038 822L1043 835M990 845L1008 836L1043 835L1062 842M1008 836L1009 856M1043 835L1043 858M1009 856L1025 865M1043 858L1025 865"/>
                <path class="beam-thin" d="M1010 838L1041 857M1041 838L1012 858M1024 810L1030 824L1016 826ZM994 826L1006 842M1006 826L994 842M1048 822L1058 840M1058 824L1047 838M1012 808L1030 822M1032 808L1014 824"/>
                <path class="beam-light" d="M1020 792L1045 803L1056 820L1062 842L1053 852L1025 865L990 845L988 822L1000 805ZM1000 805L1008 810L1035 806L1045 803M1008 810L1011 826M1035 806L1038 822M1020 792L1035 806M1020 792L1008 810M988 822L1011 826L1038 822L1056 820M1011 826L1008 836M1038 822L1043 835M990 845L1008 836L1043 835L1062 842M1008 836L1009 856M1043 835L1043 858M1009 856L1025 865M1043 858L1025 865"/>
              </g>
              <g class="stroketxt">
                <text x="984" y="790">Owner</text>
                <text x="1092.500" y="787">Project</text>
                <text x="1274" y="789">Revision</text>
                <text x="1091.500" y="826">Part</text>
                <text x="1276" y="824">Page #</text>
                <text x="1273" y="861">Drawn by</text>
                <text x="979" y="899">Scale</text>
                <text x="1089.500" y="898">Date</text>
                <text x="1271.500" y="896">Accepted</text>
              </g>
            </svg>
          </div>
        </section>

        <aside class="rightpanel">
          <div class="dock-title layer-title"><span>Layer List</span>
            <span class="mini"><svg><use href="#mdr"/></svg><svg><use href="#mdx"/></svg></span>
          </div>
          <div class="search"></div>
          <div class="layer-btns">
            <span class="sq sq-l"><svg><use href="#eye"/></svg></span>
            <span class="sq sq-l"><svg><use href="#eyeg"/></svg></span>
            <span class="sq sq-l"><svg><use href="#plus"/></svg></span>
            <span class="sq sq-l"><svg><use href="#minus"/></svg></span>
            <span class="sq sq-l"><svg><use href="#pen"/></svg></span>
          </div>
          <div class="layer-table">
            <div class="layer-row">
              <span class="cell"><svg><use href="#padlock"/></svg></span>
              <span class="cell"><svg><use href="#print"/></svg></span>
              <span class="cell"><svg><use href="#gridg"/></svg></span>
              <span class="cell"><b class="lswatch"></b></span>
              <span class="cell sel">0</span>
            </div>
            <div class="layer-empty"></div>
            <div class="hscroll"><em class="la"></em><span class="hhandle"></span><span class="hrest"></span><em class="ra"></em></div>
          </div>
          <div class="tabs">
            <span class="tab t1">Library Browser</span>
            <span class="tab t2">Block List</span>
            <span class="tab t3 current">Layer List</span>
          </div>
          <div class="splitter"></div>
          <div class="dock-title cmd-title"><span>Command line</span>
            <span class="mini"><svg><use href="#mdr"/></svg><svg><use href="#mdx"/></svg></span>
          </div>
          <div class="cmd-box">
            <div class="cmd-text">
              <div>0,0</div><div>-2,0</div><div>li</div>
              <div>Command: li (line)</div><div>Command: li (line)</div><div>Command: li (line)</div>
              <div>-2,-2</div><div>277,-2</div><div>li</div>
              <div>Command: li (line)</div><div>Command: li (line)</div><div>Command: li (line)</div>
              <div>-2,-2</div><div>-2,190</div><div>za</div>
              <div>Command: za (zoomauto)</div><div>Command: za (zoomauto)</div>
              <div>Loaded document: /home/padmanaban/</div>
              <div>Documents/Artistic-Engineering/LibreCAD-</div>
              <div>Notes/1_Create_template/Base-</div>
              <div>Tempalate.dxf</div>
            </div>
            <div class="vscroll"><em class="ua"></em><span class="vg"></span><span class="vh"></span><span class="vg2"></span><em class="da"></em></div>
          </div>
          <div class="cmd-label">Command:</div>
          <div class="cmd-input"></div>
        </aside>
      </div>

      <div class="toolbar tb3">
        <i class="handle h7"></i>
        <span class="tool"><svg><use href="#dimal"/></svg></span>
        <span class="tool"><svg><use href="#dimli"/></svg></span>
        <span class="tool"><svg><use href="#dimh"/></svg></span>
        <span class="tool"><svg><use href="#dimv"/></svg></span>
        <span class="tool"><svg><use href="#rad"/></svg></span>
        <span class="tool"><svg><use href="#dia"/></svg></span>
        <span class="tool"><svg><use href="#ang"/></svg></span>
        <span class="tool"><svg><use href="#leader"/></svg></span>
        <i class="handle h15"></i>
        <span class="tool ex">Ex</span>
        <span class="tool"><svg><use href="#cross"/></svg></span>
        <span class="tool"><svg><use href="#dots"/></svg></span>
        <span class="tool"><svg><use href="#sendp"/></svg></span>
        <span class="tool"><svg><use href="#sent"/></svg></span>
        <span class="tool"><svg><use href="#scen"/></svg></span>
        <span class="tool"><svg><use href="#smid"/></svg></span>
        <span class="tool"><svg><use href="#sdis"/></svg></span>
        <span class="tool"><svg><use href="#sint"/></svg></span>
        <i class="sep sep7"></i>
        <span class="tool"><svg><use href="#rh"/></svg></span>
        <span class="tool"><svg><use href="#rv"/></svg></span>
        <span class="tool"><svg><use href="#ro"/></svg></span>
        <i class="sep sep8"></i>
        <span class="tool"><svg><use href="#rel"/></svg></span>
        <span class="tool"><svg><use href="#lock"/></svg></span>
        <i class="handle h16"></i>
        <span class="tool"><svg><use href="#vl"/></svg></span>
        <span class="tool on"><svg><use href="#vr"/></svg></span>
        <span class="tool"><svg><use href="#vt"/></svg></span>
        <span class="tool"><svg><use href="#vb"/></svg></span>
        <span class="tool"><svg><use href="#vc"/></svg></span>
        <i class="handle h16"></i>
        <span class="tool"><svg><use href="#addl"/></svg></span>
        <span class="tool"><svg><use href="#addt"/></svg></span>
      </div>

      <footer class="status">
        <div class="stat"><span>0.0000 , 0.0000</span><span>0.0000 &lt; 0.00°</span></div>
        <div class="stat divided"><span>0.0000 , 0.0000</span><span>0.0000 &lt; 0.00°</span></div>
        <div class="mouse">
          <svg viewBox="0 0 70 52"><path d="M21.500 1C21 8 20 13 17 14 12 15 6 14 2 9" fill="none" stroke="#111" stroke-width="2"/><path d="M25.500 52V12C25.500 7 28 4 33 4H57C62 4 64.500 7 64.500 12V52" fill="#fff" stroke="#111" stroke-width="2"/><path d="M39 5h11v19H39z" fill="#00ff80"/><path d="M25 25h40M38.500 4v21M50.500 4v21" fill="none" stroke="#111" stroke-width="2"/><path d="M45 0v4" stroke="#111" stroke-width="2"/></svg>
        </div>
        <div class="stat"><span>Selected</span><span>0</span></div>
        <div class="stat"><span>Total Length</span><span>0</span></div>
        <div class="stat"><span>Current Layer</span><span>0</span></div>
        <div class="stat"><span>Grid Status</span><span>10 / 100</span></div>
      </footer>
    </main>
  </div>
</div>
</body>
</html>
```

FILE: styles.css
```css
* { box-sizing: border-box; }
html, body { margin: 0; padding: 0; background: #111; }
body { width: 1920px; height: 1080px; overflow: hidden; font-family: "Noto Sans", "Liberation Sans", sans-serif; font-size: 14.400px; color: #1c1c1c; }
.defs { display: none; }
i, em { display: block; font-style: normal; }
.screen { width: 1920px; height: 1080px; display: grid; grid-template-rows: 27px 1fr; }

/* top bar */
.topbar { background: #121212; color: #e8e8e8; display: grid; grid-template-columns: 99px 786px 1fr auto; align-items: center; padding-left: 18px; font-size: 13.700px; }
.activities { display: block; font-size: 14.600px; }
.appname { display: flex; align-items: center; gap: 6px; font-size: 14.600px; }
.app-ico { width: 16px; height: 16px; }
.clock { display: flex; align-items: center; padding-left: 48px; gap: 17px; white-space: nowrap; }
.bell { width: 16px; height: 18px; }
.tray { display: flex; gap: 10px; padding-right: 16px; }
.tray-ico { width: 18px; height: 18px; }

/* desktop */
.desktop { display: flex; min-height: 0; }
.dock { width: 70px; background: #1b0f17; display: flex; flex-direction: column; padding-top: 4px; }
.dock-item { height: 68px; display: flex; align-items: center; justify-content: center; position: relative; flex: none; }
.dock-item.active::before { content: ""; position: absolute; left: 3px; top: 3px; width: 64px; height: 63px; background: #3b3238; border-radius: 12px; }
.dock-ico { width: 48px; height: 48px; position: relative; }
.dot { position: absolute; left: 3px; top: 50%; width: 5px; height: 5px; margin-top: -3px; border-radius: 50%; background: #e9541f; }
.dot-a { top: 28px; margin: 0; }
.dot-b { top: 35px; margin: 0; }
.dock-sep { width: 48px; height: 1px; margin: 0 auto 2px; border: 0; background: #57505a; flex: none; }
.dock-grid { margin: auto auto 23px; width: 30px; display: grid; grid-template-columns: repeat(3, 6px); justify-content: space-between; row-gap: 6px; }
.dock-grid i { width: 6px; height: 6px; border-radius: 1.500px; background: #f2f2f2; }

/* window */
.window { width: 1850px; display: flex; flex-direction: column; background: #efefef; }
.titlebar { height: 37px; background: #242424; color: #f4f4f4; display: flex; align-items: center; justify-content: center; position: relative; flex: none; }
.title { font-weight: 700; font-size: 14.500px; }
.win-btns { position: absolute; right: 7px; top: 7px; display: flex; gap: 12px; }
.win-btn { width: 22px; height: 23px; border-radius: 50%; background: #383838; display: block; }
.win-btn svg { width: 22px; height: 22px; display: block; }

.menubar { height: 21px; background: #efefef; display: flex; align-items: center; position: relative; flex: none; }
.doc-ico { width: 16px; height: 16px; margin-left: 1px; }
.menus { display: grid; grid-template-columns: 39px 68.500px 41px 48px 64px 51px 71px 78px 50px; margin-left: 9.500px; }
.menus span { display: block; white-space: nowrap; }
.mdi-btns { position: absolute; right: 1px; top: 1px; display: flex; }
.mdi-btn { width: 19px; height: 18px; border: 1px solid #cfcfcf; border-radius: 3px; background: #f2f2f2; display: block; }
.mdi-btn svg { width: 17px; height: 16px; display: block; }

.toolbar { display: flex; align-items: center; background: linear-gradient(#f8f8f8, #f0f0f0); flex: none; }
.tb1 { height: 40px; border-top: 1px solid #d8d8d8; border-bottom: 1px solid #bdbdbd; padding-left: 7px; }
.tb2 { height: 35px; border-bottom: 2px solid #c4c4c4; padding-left: 0; }
.tb3 { height: 38px; border-bottom: 1px solid #bdbdbd; padding-left: 7px; }
.handle { height: 20px; flex: none; background-image: radial-gradient(#b0b0b0 0.700px, transparent 0.800px); background-size: 3px 3px; background-repeat: repeat-y; background-position: center top; }
.h7 { width: 5px; }
.h13 { width: 13px; }
.h15 { width: 15px; }
.h16 { width: 16px; }
.h17 { width: 17px; }
.tool { width: 33px; height: 31px; display: flex; align-items: center; justify-content: center; border: 1px solid transparent; border-radius: 3px; flex: none; }
.tool svg { width: 24px; height: 24px; }
.tool.on { background: #dcdcdc; border-color: #bcbcbc; }
.tool.ex { font-size: 14px; color: #111; }
.sep { width: 7px; height: 22px; flex: none; position: relative; }
.sep::after { content: ""; position: absolute; left: 3px; top: 0; width: 1px; height: 100%; background: #d4d4d4; }
.sep6 { width: 6px; }
.sep7 { width: 7px; }
.sep8 { width: 8px; }
.sep-end { margin-left: 6px; }

.combo { height: 26px; border: 1px solid #bcbcbc; border-radius: 3px; background: linear-gradient(#fafafa, #ececec); display: flex; align-items: center; position: relative; padding-left: 5px; margin-right: 2px; white-space: nowrap; flex: none; }
.c1 { width: 144px; }
.c2 { width: 139px; }
.c3 { width: 161px; }
.swatch { width: 16px; height: 14px; background: #000; margin-right: 3px; }
.ln { width: 16px; height: 2px; background: #000; margin-right: 3px; }
.ln.thin { height: 1px; background: #888; }
.caret { position: absolute; right: 7px; top: 10px; width: 0; height: 0; border-left: 4px solid transparent; border-right: 4px solid transparent; border-top: 5px solid #555; }
.btn { height: 26px; border: 1px solid #bcbcbc; border-radius: 3px; background: linear-gradient(#fafafa, #ececec); display: flex; align-items: center; justify-content: center; margin-right: 1px; flex: none; }
.w52 { width: 52px; }
.w51 { width: 50px; }
.w49 { width: 49px; }
.scale { width: 110px; height: 26px; margin-left: 1px; border: 1px solid #bcbcbc; border-radius: 3px; background: #fff; display: flex; align-items: center; padding-left: 4px; position: relative; flex: none; }
.scale::after { content: ""; position: absolute; right: 0; top: 0; width: 21px; height: 24px; border-left: 1px solid #ccc; background: #f2f2f2; border-radius: 0 3px 3px 0; }
.scale .caret { z-index: 1; }
.scale-val { display: block; }
.check { width: 14px; height: 14px; border: 1px solid #c2c2c2; border-radius: 2px; background: #fff; margin-left: 8px; flex: none; }
.fixed { margin-left: 5px; width: 49px; }
.sq { width: 28px; height: 28px; border: 1px solid #bcbcbc; border-radius: 3px; background: linear-gradient(#fafafa, #ececec); margin-right: 8px; display: block; flex: none; }
.sq svg { width: 26px; height: 26px; display: block; }

/* workspace */
.workspace { height: 825px; display: flex; min-height: 0; flex: none; }
.lefttools { width: 40px; background: linear-gradient(90deg, #fbfbfb, #f0f0f0); display: flex; flex-direction: column; align-items: center; border-right: 1px solid #c4c4c4; flex: none; }
.vhandle { height: 12px; width: 22px; background-image: radial-gradient(#b4b4b4 0.700px, transparent 0.800px); background-size: 3px 3px; background-repeat: repeat-x; background-position: left center; flex: none; }
.v2 { height: 16px; }
.ltool { height: 32px; width: 39px; display: flex; align-items: center; justify-content: center; padding-left: 1px; flex: none; }
.ltool svg { width: 24px; height: 24px; }
.ltool.dd svg { transform: translate(2px, 2px); }

.canvas { width: 1471px; background: #c6c6c6; padding: 15px 0 0 187px; flex: none; }
.paper { width: 1135px; height: 802px; background: #fff; border: 1px solid #404040; box-shadow: 6px 6px 0 #404040; }
.sheet { width: 1133px; height: 800px; display: block; }
.ink { fill: none; stroke: #000; stroke-width: 1; shape-rendering: crispEdges; }
.logo { fill: none; shape-rendering: crispEdges; }
.beam { stroke: #111; stroke-width: 3.500; stroke-dasharray: 4 1; }
.beam-thin { stroke: #222; stroke-width: 1.500; stroke-dasharray: 3 1; }
.beam-light { stroke: #fff; stroke-width: 1; stroke-dasharray: 2 3; }
.stroketxt { font-family: "Liberation Mono", monospace; font-size: 10px; fill: #000; }
.glyph { font-family: "Liberation Sans", sans-serif; font-weight: 700; fill: #111; }
.help-q { font-family: "Liberation Sans", sans-serif; font-size: 34px; fill: #fff; }
.ssd { font-family: "Noto Sans", sans-serif; font-size: 17px; fill: #8a8a8a; }

/* right panel */
.rightpanel { width: 339px; background: #efefef; display: flex; flex-direction: column; padding-left: 5px; border-left: 1px solid #cfcfcf; flex: none; position: relative; }
.dock-title { height: 21px; display: flex; align-items: center; justify-content: space-between; padding-left: 3px; flex: none; }
.layer-title { padding-bottom: 2px; }
.mini { display: flex; gap: 1px; }
.mini svg { width: 14px; height: 14px; display: block; }
.search { width: 328px; height: 25px; margin-left: 2px; background: #fff; border: 1px solid #bcbcbc; border-radius: 3px; flex: none; }
.layer-btns { height: 40px; margin: 0 0 1px 2px; display: flex; padding-left: 27px; gap: 33px; align-items: center; flex: none; }
.sq-l { margin: 0; width: 28px; height: 28px; display: flex; align-items: center; justify-content: center; }
.sq-l svg { width: 24px; height: 24px; }
.layer-table { width: 328px; height: 292px; margin-left: 2px; border: 1px solid #c0c0c0; background: #fff; display: flex; flex-direction: column; flex: none; }
.layer-row { height: 20px; display: grid; grid-template-columns: 56px 57px 57px 57px 1fr; border-bottom: 1px solid #c8c8c8; flex: none; }
.cell { border-right: 1px solid #d8d8d8; display: flex; align-items: center; padding-left: 3px; }
.cell svg { width: 18px; height: 18px; }
.lswatch { width: 16px; height: 18px; background: #000; }
.cell.sel { background: #308cc6; color: #fff; padding-left: 4px; border: 0; }
.layer-empty { flex: 1; }
.hscroll { height: 14px; display: flex; border-top: 1px solid #c8c8c8; flex: none; background: #f5f5f5; }
.la, .ra { width: 15px; position: relative; flex: none; border-right: 1px solid #ccc; }
.ra { border-right: 0; border-left: 1px solid #ccc; }
.la::after, .ra::after { content: ""; position: absolute; top: 3px; left: 5px; border-top: 4px solid transparent; border-bottom: 4px solid transparent; }
.la::after { border-right: 5px solid #555; }
.ra::after { border-left: 5px solid #555; }
.hhandle { width: 99px; background: #dedede; border-right: 1px solid #c4c4c4; display: block; }
.hrest { flex: 1; display: block; }
.tabs { height: 26px; margin-top: 3px; display: flex; align-items: flex-start; flex: none; }
.tab { height: 24px; display: flex; align-items: center; justify-content: center; background: #dcdcdc; border: 1px solid #c4c4c4; border-bottom-color: #bbb; border-radius: 3px 3px 0 0; flex: none; }
.t1 { width: 133px; }
.t2 { width: 90px; }
.t3 { width: 88px; }
.tab.current { height: 26px; background: #f5f5f5; border-bottom: 1px solid #c4c4c4; padding-top: 2px; }
.splitter { height: 6px; flex: none; }
.cmd-title { height: 22px; padding-left: 4px; padding-right: 1px; }
.cmd-box { height: 351px; display: flex; background: #fff; border: 1px solid #bcbcbc; flex: none; overflow: hidden; }
.cmd-text { flex: 1; margin-top: -3px; padding: 0 0 0 4px; line-height: 17px; white-space: nowrap; overflow: hidden; }
.vscroll { width: 15px; border-left: 1px solid #c8c8c8; display: flex; flex-direction: column; background: #f5f5f5; flex: none; }
.ua, .da { height: 14px; position: relative; flex: none; }
.ua::after, .da::after { content: ""; position: absolute; left: 3px; top: 5px; border-left: 4px solid transparent; border-right: 4px solid transparent; }
.ua::after { border-bottom: 5px solid #555; }
.da::after { border-top: 5px solid #555; }
.vg { height: 111px; background: #dedede; display: block; }
.vh { height: 160px; background: #fafafa; display: block; }
.vg2 { flex: 1; background: #dedede; display: block; }
.cmd-label { height: 18px; color: #0000ff; line-height: 18px; flex: none; border-bottom: 1px solid #b8b8b8; }
.cmd-input { flex: 1; background: #fff; }

/* status */
.status { flex: 1; display: grid; grid-template-columns: 192px 298px 205px 60px 93px 122px 1fr; background: #efefef; }
.stat { display: flex; flex-direction: column; padding-top: 5px; white-space: nowrap; line-height: 25px; }
.stat:first-child { padding-left: 6px; }
.divided { border-left: 1px solid #b8b8b8; padding-left: 6px; margin-top: 5px; padding-top: 0; }
.mouse { padding-top: 5px; height: 57px; overflow: hidden; }
.mouse svg { width: 70px; height: 52px; margin-left: 15px; display: block; }
```
